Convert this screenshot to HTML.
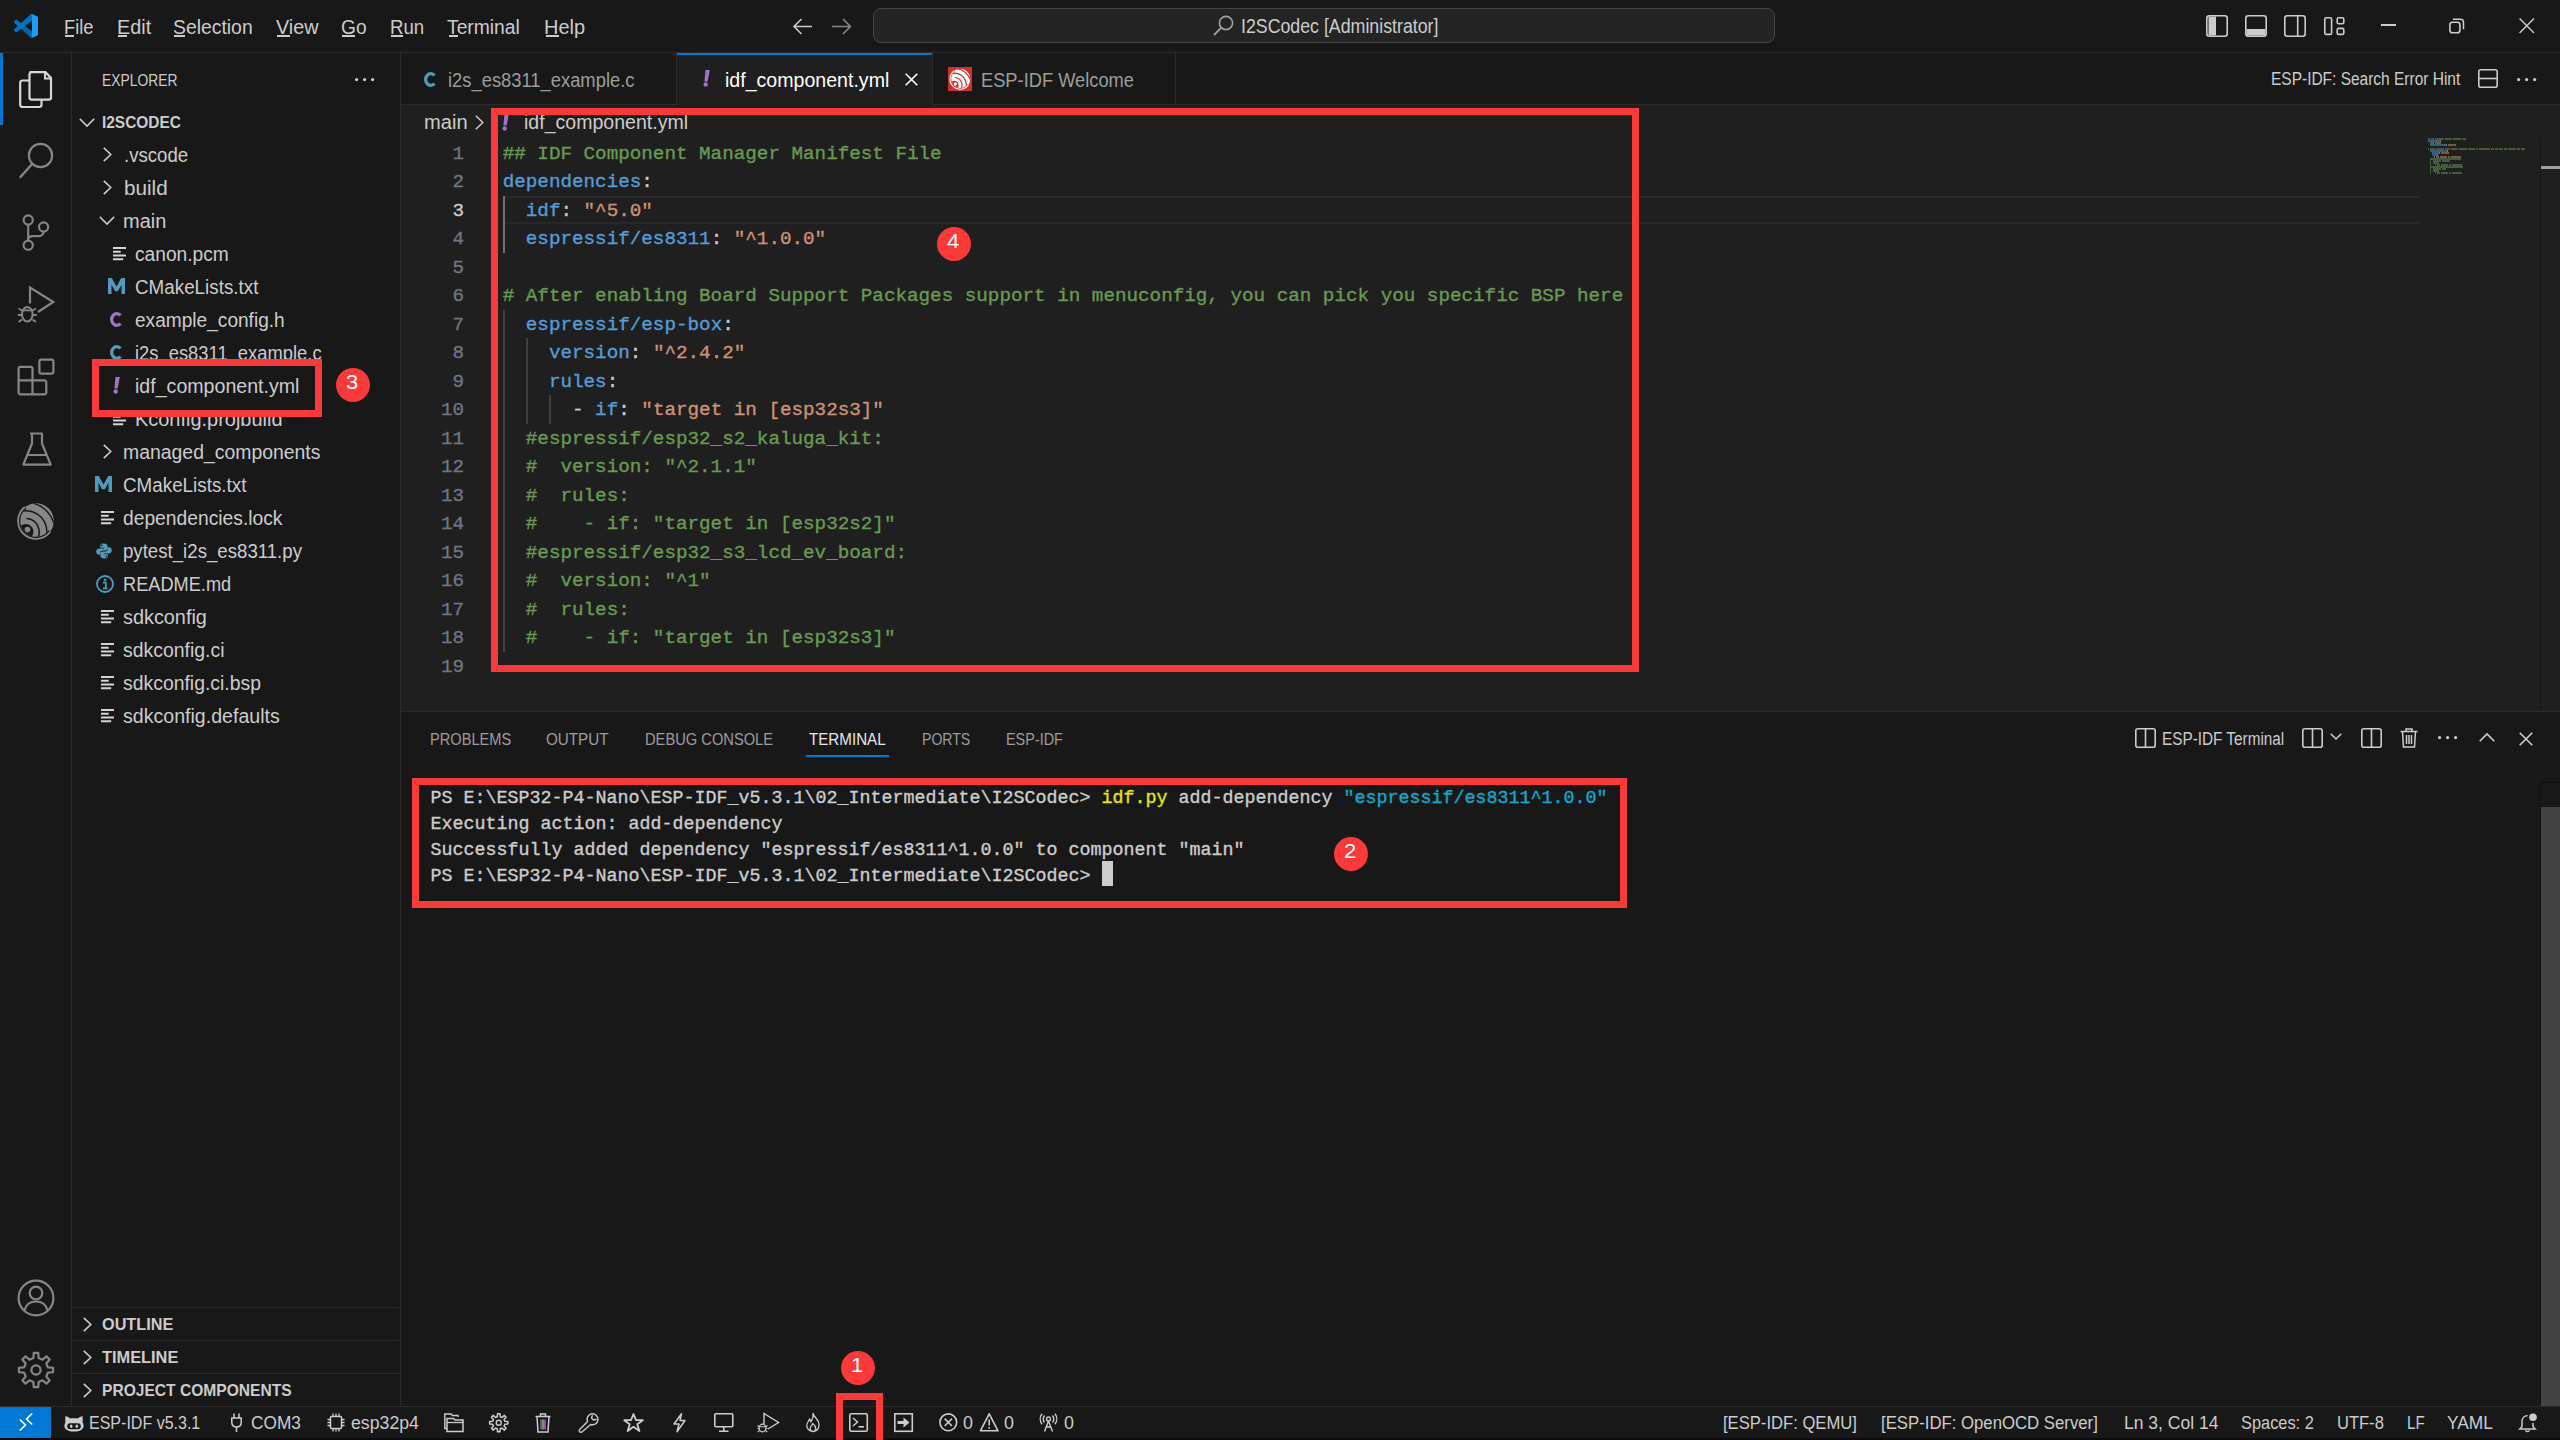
<!DOCTYPE html>
<html><head><meta charset="utf-8">
<style>
*{box-sizing:border-box;margin:0;padding:0}
html,body{width:2560px;height:1440px;overflow:hidden;background:#181818;font-family:"Liberation Sans",sans-serif;color:#cccccc}
.a{position:absolute}
.t{position:absolute;white-space:pre;line-height:1}
svg{position:absolute;overflow:visible}
</style></head><body>
<div class="a" style="left:0px;top:0px;width:2560px;height:1440px;background:#181818;"></div>
<div class="a" style="left:0px;top:52px;width:2560px;height:1px;background:#2b2b2b;"></div>
<div class="a" style="left:71px;top:53px;width:1px;height:1353px;background:#2b2b2b;"></div>
<div class="a" style="left:400px;top:53px;width:1px;height:1353px;background:#2b2b2b;"></div>
<div class="a" style="left:401px;top:104px;width:2159px;height:1px;background:#2b2b2b;"></div>
<div class="a" style="left:401px;top:105px;width:2159px;height:606px;background:#1f1f1f;"></div>
<div class="a" style="left:677px;top:53px;width:255px;height:52px;background:#1f1f1f;"></div>
<div class="a" style="left:677px;top:53px;width:255px;height:2px;background:#0078d4;"></div>
<div class="a" style="left:676px;top:53px;width:1px;height:51px;background:#2b2b2b;"></div>
<div class="a" style="left:932px;top:53px;width:1px;height:51px;background:#2b2b2b;"></div>
<div class="a" style="left:1175px;top:53px;width:1px;height:51px;background:#2b2b2b;"></div>
<div class="a" style="left:401px;top:711px;width:2159px;height:1px;background:#2b2b2b;"></div>
<div class="a" style="left:0px;top:1406px;width:2560px;height:1px;background:#2b2b2b;"></div>
<div class="a" style="left:0px;top:1407px;width:51px;height:31px;background:#0078d4;"></div>
<div class="a" style="left:0px;top:1438px;width:2560px;height:2px;background:#0b0b0b;"></div>
<div class="a" style="left:72px;top:1307px;width:327px;height:1px;background:#2b2b2b;"></div>
<div class="a" style="left:72px;top:1340px;width:327px;height:1px;background:#2b2b2b;"></div>
<div class="a" style="left:72px;top:1373px;width:327px;height:1px;background:#2b2b2b;"></div>
<svg style="left:14px;top:14px;" width="24" height="24" viewBox="0 0 100 100"><path fill="#0065a9" d="M96.46 10.8L75.86.87C73.48-.28 70.62.2 68.75 2.08L29.3 38.06 12.12 25.02c-1.6-1.22-3.84-1.12-5.32.23l-5.52 5.02c-1.81 1.65-1.81 4.51-.01 6.16L16.17 50 1.27 63.57c-1.8 1.65-1.8 4.51.01 6.16l5.52 5.02c1.48 1.35 3.72 1.45 5.32.23L29.3 61.94l39.45 35.98c1.87 1.88 4.73 2.36 7.11 1.21l20.6-9.93c2.16-1.04 3.54-3.23 3.54-5.63V16.43c0-2.4-1.38-4.59-3.54-5.63zM75.02 72.7L45.08 50l29.94-22.7v45.4z"/>
<path fill="#007acc" d="M96.46 10.8L75.86.87C73.48-.28 70.62.2 68.75 2.08L29.3 38.06 12.12 25.02c-1.6-1.22-3.84-1.12-5.32.23l-5.52 5.02c-1.81 1.65-1.81 4.51-.01 6.16L16.17 50 1.27 63.57c-1.8 1.65-1.8 4.51.01 6.16l5.52 5.02c1.48 1.35 3.72 1.45 5.32.23L29.3 61.94 45.08 50 75.02 27.3 96.46 10.8z" opacity="0.6"/>
<path fill="#1f9cf0" d="M75.86 99.13c-2.38 1.15-5.24.67-7.11-1.21 2.3 2.3 6.25.67 6.25-2.59V4.67c0-3.26-3.95-4.89-6.25-2.59 1.87-1.88 4.73-2.36 7.11-1.21l20.6 9.93c2.16 1.04 3.54 3.23 3.54 5.63v67.14c0 2.4-1.38 4.59-3.54 5.63l-20.6 9.93z"/></svg>
<div class="t" style="left:63.50px;top:17.51px;font-family:'Liberation Sans',sans-serif;font-size:19.5px;font-weight:400;color:#cccccc;transform:scaleX(0.9376);transform-origin:0 0;">File</div>
<div class="t" style="left:116.50px;top:17.51px;font-family:'Liberation Sans',sans-serif;font-size:19.5px;font-weight:400;color:#cccccc;transform:scaleX(1.0174);transform-origin:0 0;">Edit</div>
<div class="t" style="left:172.90px;top:17.51px;font-family:'Liberation Sans',sans-serif;font-size:19.5px;font-weight:400;color:#cccccc;transform:scaleX(0.9929);transform-origin:0 0;">Selection</div>
<div class="t" style="left:275.50px;top:17.51px;font-family:'Liberation Sans',sans-serif;font-size:19.5px;font-weight:400;color:#cccccc;transform:scaleX(1.0160);transform-origin:0 0;">View</div>
<div class="t" style="left:340.50px;top:17.51px;font-family:'Liberation Sans',sans-serif;font-size:19.5px;font-weight:400;color:#cccccc;transform:scaleX(0.9815);transform-origin:0 0;">Go</div>
<div class="t" style="left:389.50px;top:17.51px;font-family:'Liberation Sans',sans-serif;font-size:19.5px;font-weight:400;color:#cccccc;transform:scaleX(0.9572);transform-origin:0 0;">Run</div>
<div class="t" style="left:447.25px;top:17.51px;font-family:'Liberation Sans',sans-serif;font-size:19.5px;font-weight:400;color:#cccccc;transform:scaleX(0.9878);transform-origin:0 0;">Terminal</div>
<div class="t" style="left:544.10px;top:17.51px;font-family:'Liberation Sans',sans-serif;font-size:19.5px;font-weight:400;color:#cccccc;transform:scaleX(1.0222);transform-origin:0 0;">Help</div>
<div class="a" style="left:65px;top:35px;width:9px;height:1.5px;background:#cccccc;"></div>
<div class="a" style="left:118px;top:35px;width:9px;height:1.5px;background:#cccccc;"></div>
<div class="a" style="left:174.4px;top:35px;width:10.6px;height:1.5px;background:#cccccc;"></div>
<div class="a" style="left:277px;top:35px;width:13px;height:1.5px;background:#cccccc;"></div>
<div class="a" style="left:342px;top:35px;width:13px;height:1.5px;background:#cccccc;"></div>
<div class="a" style="left:391px;top:35px;width:11.5px;height:1.5px;background:#cccccc;"></div>
<div class="a" style="left:448.75px;top:35px;width:9.25px;height:1.5px;background:#cccccc;"></div>
<div class="a" style="left:545.6px;top:35px;width:13.4px;height:1.5px;background:#cccccc;"></div>
<svg style="left:793px;top:18.4px;" width="20" height="17" viewBox="0 0 20 17"><path d="M1 8.5H19M8.5 1L1 8.5 8.5 16" fill="none" stroke="#cccccc" stroke-width="1.6"/></svg>
<svg style="left:832px;top:18.4px;" width="20" height="17" viewBox="0 0 20 17"><path d="M0 8.5H18.5M11 1L18.5 8.5 11 16" fill="none" stroke="#868686" stroke-width="1.6"/></svg>
<div class="a" style="left:873px;top:8px;width:902px;height:35px;background:#242424;border:1px solid #454545;border-radius:8px;"></div>
<svg style="left:1213px;top:15px;" width="21" height="21" viewBox="0 0 21 21"><circle cx="13" cy="8" r="6.6" fill="none" stroke="#a0a0a0" stroke-width="1.6"/><path d="M8.3 12.7L1 20" stroke="#a0a0a0" stroke-width="1.8"/></svg>
<div class="t" style="left:1240.50px;top:16.51px;font-family:'Liberation Sans',sans-serif;font-size:19.5px;font-weight:400;color:#cccccc;transform:scaleX(0.9108);transform-origin:0 0;">I2SCodec [Administrator]</div>
<svg style="left:2206px;top:15px;" width="22" height="22" viewBox="0 0 22 22"><rect x="0.8" y="0.8" width="20.4" height="20.4" rx="2.5" fill="none" stroke="#cccccc" stroke-width="1.6"/><path d="M2.5 1.5H10V20.5H2.5Z" fill="#cccccc"/></svg>
<svg style="left:2245px;top:15px;" width="22" height="22" viewBox="0 0 22 22"><rect x="0.8" y="0.8" width="20.4" height="20.4" rx="2.5" fill="none" stroke="#cccccc" stroke-width="1.6"/><path d="M1.5 14H20.5V19a1.5 1.5 0 0 1-1.5 1.5H3A1.5 1.5 0 0 1 1.5 19Z" fill="#cccccc"/></svg>
<svg style="left:2284px;top:15px;" width="22" height="22" viewBox="0 0 22 22"><rect x="0.8" y="0.8" width="20.4" height="20.4" rx="2.5" fill="none" stroke="#cccccc" stroke-width="1.6"/><path d="M13.7 1V21" stroke="#cccccc" stroke-width="1.6"/></svg>
<svg style="left:2324px;top:17px;" width="22" height="19" viewBox="0 0 22 19"><rect x="0.8" y="0.8" width="6.8" height="16.6" rx="1.5" fill="none" stroke="#cccccc" stroke-width="1.6"/><rect x="13.2" y="0.8" width="6.6" height="6" rx="1.5" fill="none" stroke="#cccccc" stroke-width="1.6"/><rect x="13.2" y="11.4" width="6.6" height="6" rx="1.5" fill="none" stroke="#cccccc" stroke-width="1.6"/></svg>
<div class="a" style="left:2381px;top:24px;width:15px;height:1.6px;background:#cccccc;"></div>
<svg style="left:2449px;top:17.5px;" width="16" height="16" viewBox="0 0 16 16"><rect x="0.9" y="4.2" width="10" height="10.6" rx="2.6" fill="none" stroke="#cccccc" stroke-width="1.6"/><path d="M4 1.3H11.3A3.2 3.2 0 0 1 14.5 4.5V11.3" fill="none" stroke="#cccccc" stroke-width="1.5"/></svg>
<svg style="left:2518.7px;top:17.8px;" width="16" height="16" viewBox="0 0 16 16"><path d="M0.6 0.6L15 15M15 0.6L0.6 15" stroke="#cccccc" stroke-width="1.4"/></svg>
<div class="a" style="left:0px;top:53px;width:3px;height:72px;background:#0078d4;"></div>
<svg style="left:19px;top:71px;" width="33" height="37" viewBox="0 0 33 37"><path d="M10.5 1.2H26.5L32 7V26.5a2.2 2.2 0 0 1-2.2 2.2H12.7a2.2 2.2 0 0 1-2.2-2.2V3.4a2.2 2.2 0 0 1 2.2-2.2z" fill="none" stroke="#d7d7d7" stroke-width="2.2"/>
<path d="M26 1.5V7.5H32" fill="none" stroke="#d7d7d7" stroke-width="2"/>
<path d="M10.5 9.5H3.4a2.2 2.2 0 0 0-2.2 2.2V33.8a2.2 2.2 0 0 0 2.2 2.2H20.3a2.2 2.2 0 0 0 2.2-2.2V28.7" fill="none" stroke="#d7d7d7" stroke-width="2.2"/></svg>
<svg style="left:18px;top:141px;" width="36" height="39" viewBox="0 0 36 39"><circle cx="22.5" cy="14.5" r="11.6" fill="none" stroke="#868686" stroke-width="2.2"/><path d="M14.3 22.8L2.5 36" stroke="#868686" stroke-width="2.4" stroke-linecap="round"/></svg>
<svg style="left:20px;top:211px;" width="30" height="42" viewBox="0 0 30 42"><circle cx="8.2" cy="9" r="4.6" fill="none" stroke="#868686" stroke-width="2.1"/><circle cx="23.6" cy="16" r="4.6" fill="none" stroke="#868686" stroke-width="2.1"/><circle cx="8.2" cy="34.2" r="4.6" fill="none" stroke="#868686" stroke-width="2.1"/><path d="M8.2 13.6V29.6M8.2 29C8.2 26.5 9.7 25.1 12.7 25.1H19C21.5 25.1 23.6 23.2 23.6 20.6" fill="none" stroke="#868686" stroke-width="2.1"/></svg>
<svg style="left:17px;top:285px;" width="38" height="40" viewBox="0 0 38 40"><path d="M13 18.5V2.5L36.3 17L21 27" fill="none" stroke="#868686" stroke-width="2.2"/>
<ellipse cx="10.3" cy="29.3" rx="5.3" ry="7.3" fill="none" stroke="#868686" stroke-width="2"/>
<path d="M5.2 25.3H15.4M1.5 23.5L5 25.5M19 23.5L15.5 25.5M0.8 30H5M15.5 30H19.8M1.5 37L5 34.5M19 37L15.5 34.5" stroke="#868686" stroke-width="1.8" fill="none"/></svg>
<svg style="left:17px;top:358px;" width="38" height="38" viewBox="0 0 38 38"><rect x="22.4" y="1.6" width="14" height="14" rx="1.8" fill="none" stroke="#868686" stroke-width="2.2"/>
<path d="M3.4 8.8H13.7a1.8 1.8 0 0 1 1.8 1.8V22.4H27.5a1.8 1.8 0 0 1 1.8 1.8V34.5a1.8 1.8 0 0 1-1.8 1.8H3.4a1.8 1.8 0 0 1-1.8-1.8V10.6a1.8 1.8 0 0 1 1.8-1.8z" fill="none" stroke="#868686" stroke-width="2.2"/>
<path d="M1.6 22.4H15.5M15.5 22.4V36.3" stroke="#868686" stroke-width="2.2"/></svg>
<svg style="left:21px;top:432px;" width="32" height="35" viewBox="0 0 32 35"><path d="M9 1.5H21.5M11 1.5V11.5L2.3 32.6H29.7L21 11.5V1.5M6.3 23H25.7" fill="none" stroke="#868686" stroke-width="2.2" stroke-linejoin="round"/></svg>
<svg style="left:10px;top:490px;" width="52" height="60" viewBox="0 0 52 60"><defs><clipPath id="espclip"><circle cx="26" cy="31" r="15.8"/><path d="M15.04 16.97A17.8 17.8 0 0 1 40.22 41.71Z"/></clipPath></defs>
<path d="M14.98 16.89A17.9 17.9 0 1 0 40.30 41.77" fill="none" stroke="#868686" stroke-width="1.9"/>
<g clip-path="url(#espclip)">
<circle cx="26" cy="31" r="19" fill="#868686"/>
<circle cx="15.8" cy="41.7" r="7.6" fill="#181818"/>
<g fill="none" stroke="#181818" stroke-width="1.5">
<path d="M16.96 28.45A13.3 13.3 0 0 1 25.99 50.25" stroke-linecap="round"/>
<path d="M2.30 25.61A21 21 0 0 1 31.89 55.20"/>
<path d="M-3.10 19.18A29.4 29.4 0 0 1 38.32 60.60"/>
</g></g>
<circle cx="17.5" cy="39.6" r="2.8" fill="#868686"/></svg>
<svg style="left:17px;top:1279px;" width="38" height="38" viewBox="0 0 38 38"><circle cx="19" cy="19" r="17.4" fill="none" stroke="#868686" stroke-width="2.2"/><circle cx="19" cy="14" r="6.3" fill="none" stroke="#868686" stroke-width="2.2"/><path d="M7.5 31.5C9 25 13 22.5 19 22.5S29 25 30.5 31.5" fill="none" stroke="#868686" stroke-width="2.2"/></svg>
<svg style="left:17px;top:1351px;" width="38" height="38" viewBox="0 0 38 38"><path d="M30.91 16.34L36.05 16.77L36.05 21.23L30.91 21.66L29.30 25.54L32.64 29.48L29.48 32.64L25.54 29.30L21.66 30.91L21.23 36.05L16.77 36.05L16.34 30.91L12.46 29.30L8.52 32.64L5.36 29.48L8.70 25.54L7.09 21.66L1.95 21.23L1.95 16.77L7.09 16.34L8.70 12.46L5.36 8.52L8.52 5.36L12.46 8.70L16.34 7.09L16.77 1.95L21.23 1.95L21.66 7.09L25.54 8.70L29.48 5.36L32.64 8.52L29.30 12.46Z" fill="none" stroke="#868686" stroke-width="2.2" stroke-linejoin="round"/><circle cx="19" cy="19" r="4.6" fill="none" stroke="#868686" stroke-width="2.2"/></svg>
<div class="t" style="left:101.50px;top:72.47px;font-family:'Liberation Sans',sans-serif;font-size:16.5px;font-weight:400;color:#cccccc;transform:scaleX(0.8391);transform-origin:0 0;">EXPLORER</div>
<svg style="left:354.9px;top:77.5px;" width="3.2" height="3.2" viewBox="0 0 3.2 3.2"><circle cx="1.6" cy="1.6" r="1.6" fill="#cccccc"/></svg>
<svg style="left:362.9px;top:77.5px;" width="3.2" height="3.2" viewBox="0 0 3.2 3.2"><circle cx="1.6" cy="1.6" r="1.6" fill="#cccccc"/></svg>
<svg style="left:370.9px;top:77.5px;" width="3.2" height="3.2" viewBox="0 0 3.2 3.2"><circle cx="1.6" cy="1.6" r="1.6" fill="#cccccc"/></svg>
<svg style="left:79px;top:118px;" width="16" height="9" viewBox="0 0 16 9"><path d="M0.8 0.8L8 8L15.2 0.8" fill="none" stroke="#cccccc" stroke-width="1.6"/></svg>
<div class="t" style="left:101.50px;top:113.97px;font-family:'Liberation Sans',sans-serif;font-size:16.5px;font-weight:700;color:#cccccc;transform:scaleX(0.9345);transform-origin:0 0;">I2SCODEC</div>
<svg style="left:103.4px;top:147.0px;" width="9" height="15" viewBox="0 0 9 15"><path d="M0.8 0.8L7.8 7.5L0.8 14.2" fill="none" stroke="#cccccc" stroke-width="1.6"/></svg>
<div class="t" style="left:123.70px;top:146.01px;font-family:'Liberation Sans',sans-serif;font-size:19.5px;font-weight:400;color:#cccccc;transform:scaleX(0.9552);transform-origin:0 0;">.vscode</div>
<svg style="left:103.4px;top:180.0px;" width="9" height="15" viewBox="0 0 9 15"><path d="M0.8 0.8L7.8 7.5L0.8 14.2" fill="none" stroke="#cccccc" stroke-width="1.6"/></svg>
<div class="t" style="left:123.70px;top:179.01px;font-family:'Liberation Sans',sans-serif;font-size:19.5px;font-weight:400;color:#cccccc;transform:scaleX(1.0595);transform-origin:0 0;">build</div>
<svg style="left:98.7px;top:216.0px;" width="16" height="9" viewBox="0 0 16 9"><path d="M0.8 0.8L8 8L15.2 0.8" fill="none" stroke="#cccccc" stroke-width="1.6"/></svg>
<div class="t" style="left:123.20px;top:212.01px;font-family:'Liberation Sans',sans-serif;font-size:19.5px;font-weight:400;color:#cccccc;transform:scaleX(1.0268);transform-origin:0 0;">main</div>
<svg style="left:113px;top:246.9px;" width="14" height="14" viewBox="0 0 14 14"><path d="M0 1H13M0 4.75H7.7M0 8.5H13M0 12.25H10.2" stroke="#d4d4d4" stroke-width="2"/></svg>
<div class="t" style="left:135.40px;top:245.01px;font-family:'Liberation Sans',sans-serif;font-size:19.5px;font-weight:400;color:#cccccc;transform:scaleX(0.9837);transform-origin:0 0;">canon.pcm</div>
<svg style="left:107.7px;top:277.5px;" width="18" height="17" viewBox="0 0 18 17"><path d="M0 16V0H3.8L8.5 8.6L13.2 0H17V16H13.5V6.8L9.9 13.2H7.1L3.5 6.8V16Z" fill="#519aba"/></svg>
<div class="t" style="left:135.40px;top:278.01px;font-family:'Liberation Sans',sans-serif;font-size:19.5px;font-weight:400;color:#cccccc;transform:scaleX(0.9651);transform-origin:0 0;">CMakeLists.txt</div>
<svg style="left:110px;top:312.0px;" width="14" height="16" viewBox="0 0 14 16"><path d="M10.45 3.59A5.05 5.85 0 1 0 10.45 11.41" fill="none" stroke="#a074c4" stroke-width="3.3"/></svg>
<div class="t" style="left:135.40px;top:311.01px;font-family:'Liberation Sans',sans-serif;font-size:19.5px;font-weight:400;color:#cccccc;transform:scaleX(0.9796);transform-origin:0 0;">example_config.h</div>
<svg style="left:110px;top:345.0px;" width="14" height="16" viewBox="0 0 14 16"><path d="M10.45 3.59A5.05 5.85 0 1 0 10.45 11.41" fill="none" stroke="#519aba" stroke-width="3.3"/></svg>
<div class="t" style="left:135.40px;top:344.01px;font-family:'Liberation Sans',sans-serif;font-size:19.5px;font-weight:400;color:#cccccc;transform:scaleX(0.9422);transform-origin:0 0;">i2s_es8311_example.c</div>
<svg style="left:114px;top:377.0px;" width="8" height="18" viewBox="0 0 8 18"><path d="M1.5 -0.1H5.8L3.7 11.4H0.4Z" fill="#a074c4"/><circle cx="1.7" cy="14.5" r="2.2" fill="#a074c4"/></svg>
<div class="t" style="left:135.40px;top:377.01px;font-family:'Liberation Sans',sans-serif;font-size:19.5px;font-weight:400;color:#cccccc;transform:scaleX(1.0049);transform-origin:0 0;">idf_component.yml</div>
<svg style="left:113px;top:411.9px;" width="14" height="14" viewBox="0 0 14 14"><path d="M0 1H13M0 4.75H7.7M0 8.5H13M0 12.25H10.2" stroke="#d4d4d4" stroke-width="2"/></svg>
<div class="t" style="left:135.40px;top:410.01px;font-family:'Liberation Sans',sans-serif;font-size:19.5px;font-weight:400;color:#cccccc;transform:scaleX(1.0230);transform-origin:0 0;">Kconfig.projbuild</div>
<svg style="left:103.4px;top:444.0px;" width="9" height="15" viewBox="0 0 9 15"><path d="M0.8 0.8L7.8 7.5L0.8 14.2" fill="none" stroke="#cccccc" stroke-width="1.6"/></svg>
<div class="t" style="left:123.00px;top:443.01px;font-family:'Liberation Sans',sans-serif;font-size:19.5px;font-weight:400;color:#cccccc;transform:scaleX(0.9952);transform-origin:0 0;">managed_components</div>
<svg style="left:95.2px;top:475.5px;" width="18" height="17" viewBox="0 0 18 17"><path d="M0 16V0H3.8L8.5 8.6L13.2 0H17V16H13.5V6.8L9.9 13.2H7.1L3.5 6.8V16Z" fill="#519aba"/></svg>
<div class="t" style="left:123.00px;top:476.01px;font-family:'Liberation Sans',sans-serif;font-size:19.5px;font-weight:400;color:#cccccc;transform:scaleX(0.9651);transform-origin:0 0;">CMakeLists.txt</div>
<svg style="left:100.5px;top:510.9px;" width="14" height="14" viewBox="0 0 14 14"><path d="M0 1H13M0 4.75H7.7M0 8.5H13M0 12.25H10.2" stroke="#d4d4d4" stroke-width="2"/></svg>
<div class="t" style="left:123.00px;top:509.01px;font-family:'Liberation Sans',sans-serif;font-size:19.5px;font-weight:400;color:#cccccc;transform:scaleX(0.9873);transform-origin:0 0;">dependencies.lock</div>
<svg style="left:96.25px;top:542.5px;" width="16" height="16" viewBox="0 0 16 16"><path d="M7.8 0.5C4.5 0.5 4.3 1.9 4.3 3V4.8H8V5.6H2.9C1.3 5.6 0.2 7 0.2 8.6S1.2 11.7 2.8 11.7H4.3V9.7C4.3 8.4 5.4 7.5 6.6 7.5H9.7C10.8 7.5 11.6 6.6 11.6 5.6V3C11.6 1.5 10.3 0.5 7.8 0.5ZM5.8 1.6A.8.8 0 1 1 5.8 3.2.8.8 0 0 1 5.8 1.6Z" fill="#519aba"/><path d="M8.2 15.5C11.5 15.5 11.7 14.1 11.7 13V11.2H8V10.4H13.1C14.7 10.4 15.8 9 15.8 7.4S14.8 4.3 13.2 4.3H11.7V6.3C11.7 7.6 10.6 8.5 9.4 8.5H6.3C5.2 8.5 4.4 9.4 4.4 10.4V13C4.4 14.5 5.7 15.5 8.2 15.5ZM10.2 14.4A.8.8 0 1 1 10.2 12.8.8.8 0 0 1 10.2 14.4Z" fill="#519aba"/></svg>
<div class="t" style="left:123.00px;top:542.01px;font-family:'Liberation Sans',sans-serif;font-size:19.5px;font-weight:400;color:#cccccc;transform:scaleX(0.9562);transform-origin:0 0;">pytest_i2s_es8311.py</div>
<svg style="left:95.5px;top:574.5px;" width="18" height="18" viewBox="0 0 18 18"><circle cx="9" cy="9" r="8" fill="none" stroke="#519aba" stroke-width="1.8"/><circle cx="9" cy="5" r="1.3" fill="#519aba"/><path d="M7 7.6H9.8V13.2M6.8 13.4H11.4" fill="none" stroke="#519aba" stroke-width="1.7"/></svg>
<div class="t" style="left:123.00px;top:575.01px;font-family:'Liberation Sans',sans-serif;font-size:19.5px;font-weight:400;color:#cccccc;transform:scaleX(0.9329);transform-origin:0 0;">README.md</div>
<svg style="left:100.5px;top:609.9px;" width="14" height="14" viewBox="0 0 14 14"><path d="M0 1H13M0 4.75H7.7M0 8.5H13M0 12.25H10.2" stroke="#d4d4d4" stroke-width="2"/></svg>
<div class="t" style="left:123.00px;top:608.01px;font-family:'Liberation Sans',sans-serif;font-size:19.5px;font-weight:400;color:#cccccc;transform:scaleX(1.0183);transform-origin:0 0;">sdkconfig</div>
<svg style="left:100.5px;top:642.9px;" width="14" height="14" viewBox="0 0 14 14"><path d="M0 1H13M0 4.75H7.7M0 8.5H13M0 12.25H10.2" stroke="#d4d4d4" stroke-width="2"/></svg>
<div class="t" style="left:123.00px;top:641.01px;font-family:'Liberation Sans',sans-serif;font-size:19.5px;font-weight:400;color:#cccccc;transform:scaleX(0.9968);transform-origin:0 0;">sdkconfig.ci</div>
<svg style="left:100.5px;top:675.9px;" width="14" height="14" viewBox="0 0 14 14"><path d="M0 1H13M0 4.75H7.7M0 8.5H13M0 12.25H10.2" stroke="#d4d4d4" stroke-width="2"/></svg>
<div class="t" style="left:123.00px;top:674.01px;font-family:'Liberation Sans',sans-serif;font-size:19.5px;font-weight:400;color:#cccccc;transform:scaleX(0.9950);transform-origin:0 0;">sdkconfig.ci.bsp</div>
<svg style="left:100.5px;top:708.9px;" width="14" height="14" viewBox="0 0 14 14"><path d="M0 1H13M0 4.75H7.7M0 8.5H13M0 12.25H10.2" stroke="#d4d4d4" stroke-width="2"/></svg>
<div class="t" style="left:123.00px;top:707.01px;font-family:'Liberation Sans',sans-serif;font-size:19.5px;font-weight:400;color:#cccccc;transform:scaleX(1.0043);transform-origin:0 0;">sdkconfig.defaults</div>
<svg style="left:83.3px;top:1317px;" width="9" height="15" viewBox="0 0 9 15"><path d="M0.8 0.8L7.8 7.5L0.8 14.2" fill="none" stroke="#cccccc" stroke-width="1.6"/></svg>
<div class="t" style="left:101.50px;top:1316.47px;font-family:'Liberation Sans',sans-serif;font-size:16.5px;font-weight:700;color:#cccccc;transform:scaleX(0.9846);transform-origin:0 0;">OUTLINE</div>
<svg style="left:83.3px;top:1350px;" width="9" height="15" viewBox="0 0 9 15"><path d="M0.8 0.8L7.8 7.5L0.8 14.2" fill="none" stroke="#cccccc" stroke-width="1.6"/></svg>
<div class="t" style="left:101.50px;top:1349.47px;font-family:'Liberation Sans',sans-serif;font-size:16.5px;font-weight:700;color:#cccccc;transform:scaleX(0.9910);transform-origin:0 0;">TIMELINE</div>
<svg style="left:83.3px;top:1383px;" width="9" height="15" viewBox="0 0 9 15"><path d="M0.8 0.8L7.8 7.5L0.8 14.2" fill="none" stroke="#cccccc" stroke-width="1.6"/></svg>
<div class="t" style="left:101.50px;top:1382.47px;font-family:'Liberation Sans',sans-serif;font-size:16.5px;font-weight:700;color:#cccccc;transform:scaleX(0.9446);transform-origin:0 0;">PROJECT COMPONENTS</div>
<svg style="left:423.5px;top:71.5px;" width="14" height="16" viewBox="0 0 14 16"><path d="M10.45 3.59A5.05 5.85 0 1 0 10.45 11.41" fill="none" stroke="#519aba" stroke-width="3.3"/></svg>
<div class="t" style="left:448.00px;top:70.51px;font-family:'Liberation Sans',sans-serif;font-size:19.5px;font-weight:400;color:#9d9d9d;transform:scaleX(0.9416);transform-origin:0 0;">i2s_es8311_example.c</div>
<svg style="left:704.3px;top:70px;" width="8" height="18" viewBox="0 0 8 18"><path d="M1.5 -0.1H5.8L3.7 11.4H0.4Z" fill="#a074c4"/><circle cx="1.7" cy="14.5" r="2.2" fill="#a074c4"/></svg>
<div class="t" style="left:725.00px;top:70.51px;font-family:'Liberation Sans',sans-serif;font-size:19.5px;font-weight:400;color:#ffffff;transform:scaleX(1.0040);transform-origin:0 0;">idf_component.yml</div>
<svg style="left:904.5px;top:72.5px;" width="13" height="13" viewBox="0 0 13 13"><path d="M0.7 0.7L12.3 12.3M12.3 0.7L0.7 12.3" stroke="#ffffff" stroke-width="1.6"/></svg>
<svg style="left:948px;top:67px;" width="24" height="24" viewBox="0 0 24 24"><rect x="0" y="0" width="24" height="24" fill="#d0302a"/>
<defs><clipPath id="espclip2"><circle cx="26" cy="31" r="15.8"/><path d="M15.04 16.97A17.8 17.8 0 0 1 40.22 41.71Z"/></clipPath></defs>
<g transform="translate(12.2 12) scale(0.57) translate(-26 -31)">
<path d="M14.98 16.89A17.9 17.9 0 1 0 40.30 41.77" fill="none" stroke="#fff" stroke-width="1.9"/>
<g clip-path="url(#espclip2)">
<circle cx="26" cy="31" r="19" fill="#fff"/>
<circle cx="15.8" cy="41.7" r="7.6" fill="#d0302a"/>
<g fill="none" stroke="#d0302a" stroke-width="2">
<path d="M16.96 28.45A13.3 13.3 0 0 1 25.99 50.25" stroke-linecap="round"/>
<path d="M2.30 25.61A21 21 0 0 1 31.89 55.20"/>
<path d="M-3.10 19.18A29.4 29.4 0 0 1 38.32 60.60"/>
</g></g>
<circle cx="17.5" cy="39.6" r="2.8" fill="#fff"/></g></svg>
<div class="t" style="left:981.00px;top:70.51px;font-family:'Liberation Sans',sans-serif;font-size:19.5px;font-weight:400;color:#9d9d9d;transform:scaleX(0.9369);transform-origin:0 0;">ESP-IDF Welcome</div>
<div class="t" style="left:2271.00px;top:70.24px;font-family:'Liberation Sans',sans-serif;font-size:18px;font-weight:400;color:#cccccc;transform:scaleX(0.8599);transform-origin:0 0;">ESP-IDF: Search Error Hint</div>
<svg style="left:2478px;top:69px;" width="20" height="19" viewBox="0 0 20 19"><rect x="0.8" y="0.8" width="18.4" height="17.4" rx="2" fill="none" stroke="#cccccc" stroke-width="1.6"/><path d="M1 9.5H19" stroke="#cccccc" stroke-width="1.6"/></svg>
<svg style="left:2516.9px;top:77.9px;" width="3.2" height="3.2" viewBox="0 0 3.2 3.2"><circle cx="1.6" cy="1.6" r="1.6" fill="#cccccc"/></svg>
<svg style="left:2524.9px;top:77.9px;" width="3.2" height="3.2" viewBox="0 0 3.2 3.2"><circle cx="1.6" cy="1.6" r="1.6" fill="#cccccc"/></svg>
<svg style="left:2532.9px;top:77.9px;" width="3.2" height="3.2" viewBox="0 0 3.2 3.2"><circle cx="1.6" cy="1.6" r="1.6" fill="#cccccc"/></svg>
<div class="t" style="left:424.00px;top:113.01px;font-family:'Liberation Sans',sans-serif;font-size:19.5px;font-weight:400;color:#cccccc;transform:scaleX(1.0317);transform-origin:0 0;">main</div>
<svg style="left:475px;top:114.5px;" width="9" height="15" viewBox="0 0 9 15"><path d="M0.8 0.8L7.8 7.5L0.8 14.2" fill="none" stroke="#cccccc" stroke-width="1.5"/></svg>
<svg style="left:502.9px;top:113.7px;" width="8" height="18" viewBox="0 0 8 18"><path d="M1.5 -0.1H5.8L3.7 11.4H0.4Z" fill="#a074c4"/><circle cx="1.7" cy="14.5" r="2.2" fill="#a074c4"/></svg>
<div class="t" style="left:524.00px;top:113.01px;font-family:'Liberation Sans',sans-serif;font-size:19.5px;font-weight:400;color:#cccccc;transform:scaleX(1.0024);transform-origin:0 0;">idf_component.yml</div>
<div class="a" style="left:505px;top:195.5px;width:1915px;height:28.5px;background:transparent;border-top:2px solid #282828;border-bottom:2px solid #282828;"></div>
<div class="a" style="left:503.0px;top:195.5px;width:2px;height:57.0px;background:#707070;"></div>
<div class="a" style="left:503.0px;top:309.5px;width:2px;height:342.0px;background:#404040;"></div>
<div class="a" style="left:526.1px;top:338.0px;width:2px;height:85.5px;background:#404040;"></div>
<div class="a" style="left:549.2px;top:395.0px;width:2px;height:28.5px;background:#404040;"></div>
<div class="t" style="left:452.45px;top:144.75px;font-family:'Liberation Mono',monospace;font-size:19.25px;font-weight:400;color:#6e7681;-webkit-text-stroke:0.35px currentColor;">1</div>
<div class="t" style="left:502.70px;top:144.75px;font-family:'Liberation Mono',monospace;font-size:19.25px;font-weight:400;color:#cccccc;-webkit-text-stroke:0.35px currentColor;"><span style="color:#6a9955">## IDF Component Manager Manifest File</span></div>
<div class="t" style="left:452.45px;top:173.25px;font-family:'Liberation Mono',monospace;font-size:19.25px;font-weight:400;color:#6e7681;-webkit-text-stroke:0.35px currentColor;">2</div>
<div class="t" style="left:502.70px;top:173.25px;font-family:'Liberation Mono',monospace;font-size:19.25px;font-weight:400;color:#cccccc;-webkit-text-stroke:0.35px currentColor;"><span style="color:#569cd6">dependencies</span><span style="color:#cccccc">:</span></div>
<div class="t" style="left:452.45px;top:201.75px;font-family:'Liberation Mono',monospace;font-size:19.25px;font-weight:400;color:#cccccc;-webkit-text-stroke:0.35px currentColor;">3</div>
<div class="t" style="left:502.70px;top:201.75px;font-family:'Liberation Mono',monospace;font-size:19.25px;font-weight:400;color:#cccccc;-webkit-text-stroke:0.35px currentColor;"><span style="color:#cccccc">  </span><span style="color:#569cd6">idf</span><span style="color:#cccccc">: </span><span style="color:#ce9178">&quot;^5.0&quot;</span></div>
<div class="t" style="left:452.45px;top:230.25px;font-family:'Liberation Mono',monospace;font-size:19.25px;font-weight:400;color:#6e7681;-webkit-text-stroke:0.35px currentColor;">4</div>
<div class="t" style="left:502.70px;top:230.25px;font-family:'Liberation Mono',monospace;font-size:19.25px;font-weight:400;color:#cccccc;-webkit-text-stroke:0.35px currentColor;"><span style="color:#cccccc">  </span><span style="color:#569cd6">espressif/es8311</span><span style="color:#cccccc">: </span><span style="color:#ce9178">&quot;^1.0.0&quot;</span></div>
<div class="t" style="left:452.45px;top:258.75px;font-family:'Liberation Mono',monospace;font-size:19.25px;font-weight:400;color:#6e7681;-webkit-text-stroke:0.35px currentColor;">5</div>
<div class="t" style="left:452.45px;top:287.25px;font-family:'Liberation Mono',monospace;font-size:19.25px;font-weight:400;color:#6e7681;-webkit-text-stroke:0.35px currentColor;">6</div>
<div class="t" style="left:502.70px;top:287.25px;font-family:'Liberation Mono',monospace;font-size:19.25px;font-weight:400;color:#cccccc;-webkit-text-stroke:0.35px currentColor;"><span style="color:#6a9955"># After enabling Board Support Packages support in menuconfig, you can pick you specific BSP here</span></div>
<div class="t" style="left:452.45px;top:315.75px;font-family:'Liberation Mono',monospace;font-size:19.25px;font-weight:400;color:#6e7681;-webkit-text-stroke:0.35px currentColor;">7</div>
<div class="t" style="left:502.70px;top:315.75px;font-family:'Liberation Mono',monospace;font-size:19.25px;font-weight:400;color:#cccccc;-webkit-text-stroke:0.35px currentColor;"><span style="color:#cccccc">  </span><span style="color:#569cd6">espressif/esp-box</span><span style="color:#cccccc">:</span></div>
<div class="t" style="left:452.45px;top:344.25px;font-family:'Liberation Mono',monospace;font-size:19.25px;font-weight:400;color:#6e7681;-webkit-text-stroke:0.35px currentColor;">8</div>
<div class="t" style="left:502.70px;top:344.25px;font-family:'Liberation Mono',monospace;font-size:19.25px;font-weight:400;color:#cccccc;-webkit-text-stroke:0.35px currentColor;"><span style="color:#cccccc">    </span><span style="color:#569cd6">version</span><span style="color:#cccccc">: </span><span style="color:#ce9178">&quot;^2.4.2&quot;</span></div>
<div class="t" style="left:452.45px;top:372.75px;font-family:'Liberation Mono',monospace;font-size:19.25px;font-weight:400;color:#6e7681;-webkit-text-stroke:0.35px currentColor;">9</div>
<div class="t" style="left:502.70px;top:372.75px;font-family:'Liberation Mono',monospace;font-size:19.25px;font-weight:400;color:#cccccc;-webkit-text-stroke:0.35px currentColor;"><span style="color:#cccccc">    </span><span style="color:#569cd6">rules</span><span style="color:#cccccc">:</span></div>
<div class="t" style="left:440.90px;top:401.25px;font-family:'Liberation Mono',monospace;font-size:19.25px;font-weight:400;color:#6e7681;-webkit-text-stroke:0.35px currentColor;">10</div>
<div class="t" style="left:502.70px;top:401.25px;font-family:'Liberation Mono',monospace;font-size:19.25px;font-weight:400;color:#cccccc;-webkit-text-stroke:0.35px currentColor;"><span style="color:#cccccc">      - </span><span style="color:#569cd6">if</span><span style="color:#cccccc">: </span><span style="color:#ce9178">&quot;target in [esp32s3]&quot;</span></div>
<div class="t" style="left:440.90px;top:429.75px;font-family:'Liberation Mono',monospace;font-size:19.25px;font-weight:400;color:#6e7681;-webkit-text-stroke:0.35px currentColor;">11</div>
<div class="t" style="left:502.70px;top:429.75px;font-family:'Liberation Mono',monospace;font-size:19.25px;font-weight:400;color:#cccccc;-webkit-text-stroke:0.35px currentColor;"><span style="color:#6a9955">  #espressif/esp32_s2_kaluga_kit:</span></div>
<div class="t" style="left:440.90px;top:458.25px;font-family:'Liberation Mono',monospace;font-size:19.25px;font-weight:400;color:#6e7681;-webkit-text-stroke:0.35px currentColor;">12</div>
<div class="t" style="left:502.70px;top:458.25px;font-family:'Liberation Mono',monospace;font-size:19.25px;font-weight:400;color:#cccccc;-webkit-text-stroke:0.35px currentColor;"><span style="color:#6a9955">  #  version: &quot;^2.1.1&quot;</span></div>
<div class="t" style="left:440.90px;top:486.75px;font-family:'Liberation Mono',monospace;font-size:19.25px;font-weight:400;color:#6e7681;-webkit-text-stroke:0.35px currentColor;">13</div>
<div class="t" style="left:502.70px;top:486.75px;font-family:'Liberation Mono',monospace;font-size:19.25px;font-weight:400;color:#cccccc;-webkit-text-stroke:0.35px currentColor;"><span style="color:#6a9955">  #  rules:</span></div>
<div class="t" style="left:440.90px;top:515.25px;font-family:'Liberation Mono',monospace;font-size:19.25px;font-weight:400;color:#6e7681;-webkit-text-stroke:0.35px currentColor;">14</div>
<div class="t" style="left:502.70px;top:515.25px;font-family:'Liberation Mono',monospace;font-size:19.25px;font-weight:400;color:#cccccc;-webkit-text-stroke:0.35px currentColor;"><span style="color:#6a9955">  #    - if: &quot;target in [esp32s2]&quot;</span></div>
<div class="t" style="left:440.90px;top:543.75px;font-family:'Liberation Mono',monospace;font-size:19.25px;font-weight:400;color:#6e7681;-webkit-text-stroke:0.35px currentColor;">15</div>
<div class="t" style="left:502.70px;top:543.75px;font-family:'Liberation Mono',monospace;font-size:19.25px;font-weight:400;color:#cccccc;-webkit-text-stroke:0.35px currentColor;"><span style="color:#6a9955">  #espressif/esp32_s3_lcd_ev_board:</span></div>
<div class="t" style="left:440.90px;top:572.25px;font-family:'Liberation Mono',monospace;font-size:19.25px;font-weight:400;color:#6e7681;-webkit-text-stroke:0.35px currentColor;">16</div>
<div class="t" style="left:502.70px;top:572.25px;font-family:'Liberation Mono',monospace;font-size:19.25px;font-weight:400;color:#cccccc;-webkit-text-stroke:0.35px currentColor;"><span style="color:#6a9955">  #  version: &quot;^1&quot;</span></div>
<div class="t" style="left:440.90px;top:600.75px;font-family:'Liberation Mono',monospace;font-size:19.25px;font-weight:400;color:#6e7681;-webkit-text-stroke:0.35px currentColor;">17</div>
<div class="t" style="left:502.70px;top:600.75px;font-family:'Liberation Mono',monospace;font-size:19.25px;font-weight:400;color:#cccccc;-webkit-text-stroke:0.35px currentColor;"><span style="color:#6a9955">  #  rules:</span></div>
<div class="t" style="left:440.90px;top:629.25px;font-family:'Liberation Mono',monospace;font-size:19.25px;font-weight:400;color:#6e7681;-webkit-text-stroke:0.35px currentColor;">18</div>
<div class="t" style="left:502.70px;top:629.25px;font-family:'Liberation Mono',monospace;font-size:19.25px;font-weight:400;color:#cccccc;-webkit-text-stroke:0.35px currentColor;"><span style="color:#6a9955">  #    - if: &quot;target in [esp32s3]&quot;</span></div>
<div class="t" style="left:440.90px;top:657.75px;font-family:'Liberation Mono',monospace;font-size:19.25px;font-weight:400;color:#6e7681;-webkit-text-stroke:0.35px currentColor;">19</div>
<div class="a" style="left:2428px;top:138px;width:2px;height:1.6px;background:#6a9955;opacity:0.5;"></div>
<div class="a" style="left:2431px;top:138px;width:3px;height:1.6px;background:#6a9955;opacity:0.5;"></div>
<div class="a" style="left:2435px;top:138px;width:9px;height:1.6px;background:#6a9955;opacity:0.5;"></div>
<div class="a" style="left:2445px;top:138px;width:7px;height:1.6px;background:#6a9955;opacity:0.5;"></div>
<div class="a" style="left:2453px;top:138px;width:8px;height:1.6px;background:#6a9955;opacity:0.5;"></div>
<div class="a" style="left:2462px;top:138px;width:4px;height:1.6px;background:#6a9955;opacity:0.5;"></div>
<div class="a" style="left:2428px;top:140px;width:12px;height:1.6px;background:#569cd6;opacity:0.5;"></div>
<div class="a" style="left:2440px;top:140px;width:1px;height:1.6px;background:#cccccc;opacity:0.5;"></div>
<div class="a" style="left:2430px;top:142px;width:3px;height:1.6px;background:#569cd6;opacity:0.5;"></div>
<div class="a" style="left:2433px;top:142px;width:1px;height:1.6px;background:#cccccc;opacity:0.5;"></div>
<div class="a" style="left:2435px;top:142px;width:6px;height:1.6px;background:#ce9178;opacity:0.5;"></div>
<div class="a" style="left:2430px;top:144px;width:16px;height:1.6px;background:#569cd6;opacity:0.5;"></div>
<div class="a" style="left:2446px;top:144px;width:1px;height:1.6px;background:#cccccc;opacity:0.5;"></div>
<div class="a" style="left:2448px;top:144px;width:8px;height:1.6px;background:#ce9178;opacity:0.5;"></div>
<div class="a" style="left:2428px;top:148px;width:1px;height:1.6px;background:#6a9955;opacity:0.5;"></div>
<div class="a" style="left:2430px;top:148px;width:5px;height:1.6px;background:#6a9955;opacity:0.5;"></div>
<div class="a" style="left:2436px;top:148px;width:8px;height:1.6px;background:#6a9955;opacity:0.5;"></div>
<div class="a" style="left:2445px;top:148px;width:5px;height:1.6px;background:#6a9955;opacity:0.5;"></div>
<div class="a" style="left:2451px;top:148px;width:7px;height:1.6px;background:#6a9955;opacity:0.5;"></div>
<div class="a" style="left:2459px;top:148px;width:8px;height:1.6px;background:#6a9955;opacity:0.5;"></div>
<div class="a" style="left:2468px;top:148px;width:7px;height:1.6px;background:#6a9955;opacity:0.5;"></div>
<div class="a" style="left:2476px;top:148px;width:2px;height:1.6px;background:#6a9955;opacity:0.5;"></div>
<div class="a" style="left:2479px;top:148px;width:11px;height:1.6px;background:#6a9955;opacity:0.5;"></div>
<div class="a" style="left:2491px;top:148px;width:3px;height:1.6px;background:#6a9955;opacity:0.5;"></div>
<div class="a" style="left:2495px;top:148px;width:3px;height:1.6px;background:#6a9955;opacity:0.5;"></div>
<div class="a" style="left:2499px;top:148px;width:4px;height:1.6px;background:#6a9955;opacity:0.5;"></div>
<div class="a" style="left:2504px;top:148px;width:3px;height:1.6px;background:#6a9955;opacity:0.5;"></div>
<div class="a" style="left:2508px;top:148px;width:8px;height:1.6px;background:#6a9955;opacity:0.5;"></div>
<div class="a" style="left:2517px;top:148px;width:3px;height:1.6px;background:#6a9955;opacity:0.5;"></div>
<div class="a" style="left:2521px;top:148px;width:4px;height:1.6px;background:#6a9955;opacity:0.5;"></div>
<div class="a" style="left:2430px;top:150px;width:17px;height:1.6px;background:#569cd6;opacity:0.5;"></div>
<div class="a" style="left:2447px;top:150px;width:1px;height:1.6px;background:#cccccc;opacity:0.5;"></div>
<div class="a" style="left:2432px;top:152px;width:7px;height:1.6px;background:#569cd6;opacity:0.5;"></div>
<div class="a" style="left:2439px;top:152px;width:1px;height:1.6px;background:#cccccc;opacity:0.5;"></div>
<div class="a" style="left:2441px;top:152px;width:8px;height:1.6px;background:#ce9178;opacity:0.5;"></div>
<div class="a" style="left:2432px;top:154px;width:5px;height:1.6px;background:#569cd6;opacity:0.5;"></div>
<div class="a" style="left:2437px;top:154px;width:1px;height:1.6px;background:#cccccc;opacity:0.5;"></div>
<div class="a" style="left:2434px;top:156px;width:1px;height:1.6px;background:#cccccc;opacity:0.5;"></div>
<div class="a" style="left:2436px;top:156px;width:2px;height:1.6px;background:#569cd6;opacity:0.5;"></div>
<div class="a" style="left:2438px;top:156px;width:1px;height:1.6px;background:#cccccc;opacity:0.5;"></div>
<div class="a" style="left:2440px;top:156px;width:7px;height:1.6px;background:#ce9178;opacity:0.5;"></div>
<div class="a" style="left:2448px;top:156px;width:2px;height:1.6px;background:#ce9178;opacity:0.5;"></div>
<div class="a" style="left:2451px;top:156px;width:10px;height:1.6px;background:#ce9178;opacity:0.5;"></div>
<div class="a" style="left:2430px;top:158px;width:31px;height:1.6px;background:#6a9955;opacity:0.5;"></div>
<div class="a" style="left:2430px;top:160px;width:1px;height:1.6px;background:#6a9955;opacity:0.5;"></div>
<div class="a" style="left:2433px;top:160px;width:8px;height:1.6px;background:#6a9955;opacity:0.5;"></div>
<div class="a" style="left:2442px;top:160px;width:8px;height:1.6px;background:#6a9955;opacity:0.5;"></div>
<div class="a" style="left:2430px;top:162px;width:1px;height:1.6px;background:#6a9955;opacity:0.5;"></div>
<div class="a" style="left:2433px;top:162px;width:6px;height:1.6px;background:#6a9955;opacity:0.5;"></div>
<div class="a" style="left:2430px;top:164px;width:1px;height:1.6px;background:#6a9955;opacity:0.5;"></div>
<div class="a" style="left:2435px;top:164px;width:1px;height:1.6px;background:#6a9955;opacity:0.5;"></div>
<div class="a" style="left:2437px;top:164px;width:3px;height:1.6px;background:#6a9955;opacity:0.5;"></div>
<div class="a" style="left:2441px;top:164px;width:7px;height:1.6px;background:#6a9955;opacity:0.5;"></div>
<div class="a" style="left:2449px;top:164px;width:2px;height:1.6px;background:#6a9955;opacity:0.5;"></div>
<div class="a" style="left:2452px;top:164px;width:10px;height:1.6px;background:#6a9955;opacity:0.5;"></div>
<div class="a" style="left:2430px;top:166px;width:33px;height:1.6px;background:#6a9955;opacity:0.5;"></div>
<div class="a" style="left:2430px;top:168px;width:1px;height:1.6px;background:#6a9955;opacity:0.5;"></div>
<div class="a" style="left:2433px;top:168px;width:8px;height:1.6px;background:#6a9955;opacity:0.5;"></div>
<div class="a" style="left:2442px;top:168px;width:4px;height:1.6px;background:#6a9955;opacity:0.5;"></div>
<div class="a" style="left:2430px;top:170px;width:1px;height:1.6px;background:#6a9955;opacity:0.5;"></div>
<div class="a" style="left:2433px;top:170px;width:6px;height:1.6px;background:#6a9955;opacity:0.5;"></div>
<div class="a" style="left:2430px;top:172px;width:1px;height:1.6px;background:#6a9955;opacity:0.5;"></div>
<div class="a" style="left:2435px;top:172px;width:1px;height:1.6px;background:#6a9955;opacity:0.5;"></div>
<div class="a" style="left:2437px;top:172px;width:3px;height:1.6px;background:#6a9955;opacity:0.5;"></div>
<div class="a" style="left:2441px;top:172px;width:7px;height:1.6px;background:#6a9955;opacity:0.5;"></div>
<div class="a" style="left:2449px;top:172px;width:2px;height:1.6px;background:#6a9955;opacity:0.5;"></div>
<div class="a" style="left:2452px;top:172px;width:10px;height:1.6px;background:#6a9955;opacity:0.5;"></div>
<div class="a" style="left:2540px;top:138px;width:1px;height:573px;background:#151515;"></div>
<div class="a" style="left:2541px;top:166px;width:19px;height:3px;background:#a0a0a0;"></div>
<div class="t" style="left:430.00px;top:730.97px;font-family:'Liberation Sans',sans-serif;font-size:16.5px;font-weight:400;color:#9d9d9d;transform:scaleX(0.8852);transform-origin:0 0;">PROBLEMS</div>
<div class="t" style="left:546.30px;top:730.97px;font-family:'Liberation Sans',sans-serif;font-size:16.5px;font-weight:400;color:#9d9d9d;transform:scaleX(0.9217);transform-origin:0 0;">OUTPUT</div>
<div class="t" style="left:644.80px;top:730.97px;font-family:'Liberation Sans',sans-serif;font-size:16.5px;font-weight:400;color:#9d9d9d;transform:scaleX(0.8897);transform-origin:0 0;">DEBUG CONSOLE</div>
<div class="t" style="left:808.90px;top:730.97px;font-family:'Liberation Sans',sans-serif;font-size:16.5px;font-weight:400;color:#e7e7e7;transform:scaleX(0.9183);transform-origin:0 0;">TERMINAL</div>
<div class="t" style="left:921.50px;top:730.97px;font-family:'Liberation Sans',sans-serif;font-size:16.5px;font-weight:400;color:#9d9d9d;transform:scaleX(0.8529);transform-origin:0 0;">PORTS</div>
<div class="t" style="left:1005.80px;top:730.97px;font-family:'Liberation Sans',sans-serif;font-size:16.5px;font-weight:400;color:#9d9d9d;transform:scaleX(0.8734);transform-origin:0 0;">ESP-IDF</div>
<div class="a" style="left:806px;top:754.5px;width:83px;height:2px;background:#0078d4;"></div>
<svg style="left:2134.5px;top:727.5px;" width="21" height="20" viewBox="0 0 21 20"><rect x="0.8" y="0.8" width="19.4" height="18.4" rx="2" fill="none" stroke="#cccccc" stroke-width="1.6"/><path d="M10.5 1V19" stroke="#cccccc" stroke-width="1.6"/></svg>
<div class="t" style="left:2161.50px;top:730.24px;font-family:'Liberation Sans',sans-serif;font-size:18px;font-weight:400;color:#cccccc;transform:scaleX(0.8505);transform-origin:0 0;">ESP-IDF Terminal</div>
<svg style="left:2302px;top:727.5px;" width="21" height="20" viewBox="0 0 21 20"><rect x="0.8" y="0.8" width="19.4" height="18.4" rx="2" fill="none" stroke="#cccccc" stroke-width="1.6"/><path d="M10.5 1V19" stroke="#cccccc" stroke-width="1.6"/></svg>
<svg style="left:2329.5px;top:733px;" width="12" height="8" viewBox="0 0 12 8"><path d="M0.7 0.7L6 6L11.3 0.7" fill="none" stroke="#cccccc" stroke-width="1.5"/></svg>
<svg style="left:2360.5px;top:727.5px;" width="21" height="20" viewBox="0 0 21 20"><rect x="0.8" y="0.8" width="19.4" height="18.4" rx="2" fill="none" stroke="#cccccc" stroke-width="1.6"/><path d="M10.5 1V19" stroke="#cccccc" stroke-width="1.6"/></svg>
<svg style="left:2399.5px;top:727.5px;" width="18" height="20" viewBox="0 0 18 20"><path d="M0.5 3.5H17.5M6 3.5V1H12V3.5M2.5 3.5L3.5 19H14.5L15.5 3.5M6.5 7V16M9 7V16M11.5 7V16" fill="none" stroke="#cccccc" stroke-width="1.5"/></svg>
<svg style="left:2438.4px;top:736.4px;" width="3.2" height="3.2" viewBox="0 0 3.2 3.2"><circle cx="1.6" cy="1.6" r="1.6" fill="#cccccc"/></svg>
<svg style="left:2446.4px;top:736.4px;" width="3.2" height="3.2" viewBox="0 0 3.2 3.2"><circle cx="1.6" cy="1.6" r="1.6" fill="#cccccc"/></svg>
<svg style="left:2454.4px;top:736.4px;" width="3.2" height="3.2" viewBox="0 0 3.2 3.2"><circle cx="1.6" cy="1.6" r="1.6" fill="#cccccc"/></svg>
<svg style="left:2479px;top:733px;" width="16" height="9" viewBox="0 0 16 9"><path d="M0.7 8.3L8 1L15.3 8.3" fill="none" stroke="#cccccc" stroke-width="1.6"/></svg>
<svg style="left:2519px;top:731.5px;" width="14" height="14" viewBox="0 0 14 14"><path d="M0.7 0.7L13.3 13.3M13.3 0.7L0.7 13.3" stroke="#cccccc" stroke-width="1.6"/></svg>
<div class="t" style="left:430.50px;top:790.44px;font-family:'Liberation Mono',monospace;font-size:18.33px;font-weight:400;color:#cccccc;-webkit-text-stroke:0.35px currentColor;">PS E:\ESP32-P4-Nano\ESP-IDF_v5.3.1\02_Intermediate\I2SCodec> <span style="color:#e5e510">idf.py</span> add-dependency <span style="color:#11a8cd">"espressif/es8311^1.0.0"</span></div>
<div class="t" style="left:430.50px;top:816.44px;font-family:'Liberation Mono',monospace;font-size:18.33px;font-weight:400;color:#cccccc;-webkit-text-stroke:0.35px currentColor;">Executing action: add-dependency</div>
<div class="t" style="left:430.50px;top:842.44px;font-family:'Liberation Mono',monospace;font-size:18.33px;font-weight:400;color:#cccccc;-webkit-text-stroke:0.35px currentColor;">Successfully added dependency &quot;espressif/es8311^1.0.0&quot; to component &quot;main&quot;</div>
<div class="t" style="left:430.50px;top:868.44px;font-family:'Liberation Mono',monospace;font-size:18.33px;font-weight:400;color:#cccccc;-webkit-text-stroke:0.35px currentColor;">PS E:\ESP32-P4-Nano\ESP-IDF_v5.3.1\02_Intermediate\I2SCodec&gt; </div>
<div class="a" style="left:1102px;top:861px;width:11px;height:25px;background:#cccccc;"></div>
<div class="a" style="left:2540px;top:782px;width:20px;height:1px;background:#0e0e0e;"></div>
<div class="a" style="left:2540px;top:782px;width:1px;height:624px;background:#141414;"></div>
<div class="a" style="left:2541px;top:807px;width:19px;height:599px;background:#424242;"></div>
<svg style="left:19px;top:1413px;" width="14" height="18" viewBox="0 0 14 18"><path d="M0.8 6.5L6.5 12L0.8 17.5M13.2 0.5L7.5 6L13.2 11.5" fill="none" stroke="#ffffff" stroke-width="1.6"/></svg>
<svg style="left:63.5px;top:1414.5px;" width="20" height="17" viewBox="0 0 20 17"><path d="M1.5 1C1.5 1 5 2 6 3.6C7.2 3.3 8.5 3.2 10 3.2S12.8 3.3 14 3.6C15 2 18.5 1 18.5 1C18.5 1 19 5 18.5 7C19.3 8.3 19.6 9.7 19.6 11C19.6 14.5 16 16.5 10 16.5S0.4 14.5 0.4 11C0.4 9.7 0.7 8.3 1.5 7C1 5 1.5 1 1.5 1Z" fill="#cccccc"/><rect x="3.2" y="8.2" width="13.6" height="6" rx="3" fill="#181818"/><ellipse cx="7.2" cy="11.2" rx="1.3" ry="1.8" fill="#cccccc"/><ellipse cx="12.8" cy="11.2" rx="1.3" ry="1.8" fill="#cccccc"/></svg>
<div class="t" style="left:89.00px;top:1414.24px;font-family:'Liberation Sans',sans-serif;font-size:18px;font-weight:400;color:#cccccc;transform:scaleX(0.8899);transform-origin:0 0;">ESP-IDF v5.3.1</div>
<svg style="left:230.5px;top:1413px;" width="11" height="19" viewBox="0 0 11 19"><path d="M3 0.5V5M8 0.5V5M0.8 5H10.2V9.5C10.2 12.5 8.2 14 5.5 14S0.8 12.5 0.8 9.5Z" fill="none" stroke="#cccccc" stroke-width="1.5"/><path d="M5.5 14V19" stroke="#cccccc" stroke-width="1.5"/></svg>
<div class="t" style="left:251.00px;top:1414.24px;font-family:'Liberation Sans',sans-serif;font-size:18px;font-weight:400;color:#cccccc;transform:scaleX(0.9591);transform-origin:0 0;">COM3</div>
<svg style="left:326.5px;top:1413px;" width="18" height="19" viewBox="0 0 18 19"><rect x="3.5" y="3.5" width="11" height="12" rx="1" fill="none" stroke="#cccccc" stroke-width="1.5"/><path d="M6 0.5V3.5M9 0.5V3.5M12 0.5V3.5M6 15.5V18.5M9 15.5V18.5M12 15.5V18.5M0.5 6.5H3.5M0.5 9.5H3.5M0.5 12.5H3.5M14.5 6.5H17.5M14.5 9.5H17.5M14.5 12.5H17.5" stroke="#cccccc" stroke-width="1.3"/></svg>
<div class="t" style="left:351.00px;top:1414.24px;font-family:'Liberation Sans',sans-serif;font-size:18px;font-weight:400;color:#cccccc;transform:scaleX(0.9833);transform-origin:0 0;">esp32p4</div>
<svg style="left:443.5px;top:1413px;" width="20" height="20" viewBox="0 0 20 20"><path d="M0.8 3V1H7L8.5 2.5H14V4" fill="none" stroke="#cccccc" stroke-width="1.4"/><path d="M0.8 3V15.5H3" fill="none" stroke="#cccccc" stroke-width="1.4"/><path d="M3 5.5H9.5L11 7H19V18.5H3Z" fill="none" stroke="#cccccc" stroke-width="1.5"/><path d="M3 9.5H19" stroke="#cccccc" stroke-width="1.3"/></svg>
<svg style="left:489px;top:1413px;" width="20" height="20" viewBox="0 0 20 20"><path d="M15.77 8.28L18.86 8.47L18.86 11.03L15.77 11.22L15.05 12.97L17.10 15.28L15.28 17.10L12.97 15.05L11.22 15.77L11.03 18.86L8.47 18.86L8.28 15.77L6.53 15.05L4.22 17.10L2.40 15.28L4.45 12.97L3.73 11.22L0.64 11.03L0.64 8.47L3.73 8.28L4.45 6.53L2.40 4.22L4.22 2.40L6.53 4.45L8.28 3.73L8.47 0.64L11.03 0.64L11.22 3.73L12.97 4.45L15.28 2.40L17.10 4.22L15.05 6.53Z" fill="none" stroke="#cccccc" stroke-width="1.5" stroke-linejoin="round"/><circle cx="9.75" cy="9.75" r="2.5" fill="none" stroke="#cccccc" stroke-width="1.4"/></svg>
<svg style="left:535px;top:1413px;" width="16" height="20" viewBox="0 0 16 20"><path d="M0.5 3.5H15.5M5.5 3.5V1H10.5V3.5M2 3.5L3 19H13L14 3.5" fill="none" stroke="#cccccc" stroke-width="1.5"/><path d="M6 6.5V16.5" stroke="#519aba" stroke-width="1.3"/><path d="M8 6.5V16.5" stroke="#e5c07b" stroke-width="1.3"/><path d="M10 6.5V16.5" stroke="#c678dd" stroke-width="1.3"/></svg>
<svg style="left:579px;top:1413px;" width="20" height="20" viewBox="0 0 20 20"><path d="M13.5 0.8C16.5 0.8 19 3.3 19 6.3C19 9.3 16.5 11.8 13.5 11.8C12.8 11.8 12.2 11.7 11.7 11.5L3.2 18.8C2.4 19.5 1.2 19.4 0.6 18.6C0 17.9 0.2 16.8 0.9 16.2L8.6 8.4C8.3 7.8 8.1 7 8.1 6.3C8.1 3.3 10.5 0.8 13.5 0.8Z M13.5 2.2L12.5 5L14.5 7L17.6 6.2" fill="none" stroke="#cccccc" stroke-width="1.4" stroke-linejoin="round"/></svg>
<svg style="left:624px;top:1413px;" width="19" height="20" viewBox="0 0 19 20"><path d="M9.5 1L12 7.2H18.8L13.3 11.2L15.4 18L9.5 13.8L3.6 18L5.7 11.2L0.2 7.2H7Z" fill="none" stroke="#cccccc" stroke-width="1.8" stroke-linejoin="round"/></svg>
<svg style="left:672.5px;top:1413px;" width="13" height="20" viewBox="0 0 13 20"><path d="M8.5 0.8L1 11H6L4 18.8L12 7.5H7Z" fill="none" stroke="#cccccc" stroke-width="1.5" stroke-linejoin="round"/></svg>
<svg style="left:714px;top:1413px;" width="20" height="20" viewBox="0 0 20 20"><rect x="0.8" y="0.8" width="18" height="13" rx="1" fill="none" stroke="#cccccc" stroke-width="1.6"/><path d="M9.8 14V17.5M5 18.3H14.5" stroke="#cccccc" stroke-width="1.6"/></svg>
<svg style="left:757px;top:1413px;" width="22" height="20" viewBox="0 0 22 20"><path d="M7 11V0.5L21.5 9.5L11 16" fill="none" stroke="#cccccc" stroke-width="1.4"/><ellipse cx="5.5" cy="15" rx="3.4" ry="3.8" fill="none" stroke="#cccccc" stroke-width="1.3"/><path d="M2.2 13.8H8.8M0.5 12.5L2.2 13.8M10.5 12.5L8.8 13.8M0.5 15.5H2M9 15.5H10.5M0.8 19L2.5 17.5M10.2 19L8.5 17.5" stroke="#cccccc" stroke-width="1.1"/></svg>
<svg style="left:806px;top:1413px;" width="14" height="20" viewBox="0 0 14 20"><path d="M7 0.5C7.5 3 11 5.5 12.5 9C14 12.5 12.5 18.5 7.2 18.5C2.5 18.5 0.8 15 0.8 12.5C0.8 9.5 3 8 3.5 6C4.8 7.5 4.8 9 4.8 9C5.5 7 8 5 7 0.5Z M7.2 18.5C5 18.5 4 16.8 4.2 15C4.5 13 6.5 12 6.7 10.5C8.5 12 9.8 13.5 9.8 15.5C9.8 17.5 8.5 18.5 7.2 18.5Z" fill="none" stroke="#cccccc" stroke-width="1.3" stroke-linejoin="round"/></svg>
<svg style="left:849px;top:1413px;" width="20" height="20" viewBox="0 0 20 20"><rect x="0.8" y="0.8" width="17.5" height="17.5" rx="1.5" fill="none" stroke="#cccccc" stroke-width="1.6"/><path d="M4 5L8.5 9L4 13" fill="none" stroke="#cccccc" stroke-width="1.5"/><path d="M9.5 13.8H15" stroke="#cccccc" stroke-width="1.6"/></svg>
<svg style="left:894px;top:1413px;" width="20" height="20" viewBox="0 0 20 20"><rect x="0.8" y="0.8" width="17.5" height="17.5" fill="none" stroke="#cccccc" stroke-width="1.6"/><path d="M3.5 8H9.5V4.5L15.5 9.5L9.5 14.5V11H3.5Z" fill="#cccccc"/></svg>
<svg style="left:939px;top:1413px;" width="19" height="19" viewBox="0 0 19 19"><circle cx="9.3" cy="9.3" r="8.4" fill="none" stroke="#cccccc" stroke-width="1.6"/><path d="M5.6 5.6L13 13M13 5.6L5.6 13" stroke="#cccccc" stroke-width="1.5"/></svg>
<div class="t" style="left:963.00px;top:1414.24px;font-family:'Liberation Sans',sans-serif;font-size:18px;font-weight:400;color:#cccccc;transform:scaleX(0.9917);transform-origin:0 0;">0</div>
<svg style="left:980px;top:1413px;" width="19" height="19" viewBox="0 0 19 19"><path d="M9.2 0.8L18 17.8H0.4Z" fill="none" stroke="#cccccc" stroke-width="1.6" stroke-linejoin="round"/><path d="M9.2 6.5V12.5M9.2 14V15.8" stroke="#cccccc" stroke-width="1.6"/></svg>
<div class="t" style="left:1004.00px;top:1414.24px;font-family:'Liberation Sans',sans-serif;font-size:18px;font-weight:400;color:#cccccc;transform:scaleX(0.9917);transform-origin:0 0;">0</div>
<svg style="left:1040px;top:1413px;" width="17" height="20" viewBox="0 0 17 20"><circle cx="8.5" cy="6" r="2" fill="none" stroke="#cccccc" stroke-width="1.4"/><path d="M8.5 8L4.5 18.5M8.5 8L12.5 18.5M5.5 14H11.5" stroke="#cccccc" stroke-width="1.4"/><path d="M4.5 2.5C3 4.5 3 7.5 4.5 9.5M12.5 2.5C14 4.5 14 7.5 12.5 9.5M2 0.8C-0.3 3.8 -0.3 8.2 2 11.2M15 0.8C17.3 3.8 17.3 8.2 15 11.2" fill="none" stroke="#cccccc" stroke-width="1.4"/></svg>
<div class="t" style="left:1064.00px;top:1414.24px;font-family:'Liberation Sans',sans-serif;font-size:18px;font-weight:400;color:#cccccc;transform:scaleX(0.9917);transform-origin:0 0;">0</div>
<div class="t" style="left:1722.50px;top:1414.24px;font-family:'Liberation Sans',sans-serif;font-size:18px;font-weight:400;color:#cccccc;transform:scaleX(0.9229);transform-origin:0 0;">[ESP-IDF: QEMU]</div>
<div class="t" style="left:1880.50px;top:1414.24px;font-family:'Liberation Sans',sans-serif;font-size:18px;font-weight:400;color:#cccccc;transform:scaleX(0.9304);transform-origin:0 0;">[ESP-IDF: OpenOCD Server]</div>
<div class="t" style="left:2123.50px;top:1414.24px;font-family:'Liberation Sans',sans-serif;font-size:18px;font-weight:400;color:#cccccc;transform:scaleX(0.9725);transform-origin:0 0;">Ln 3, Col 14</div>
<div class="t" style="left:2240.50px;top:1414.24px;font-family:'Liberation Sans',sans-serif;font-size:18px;font-weight:400;color:#cccccc;transform:scaleX(0.9095);transform-origin:0 0;">Spaces: 2</div>
<div class="t" style="left:2336.50px;top:1414.24px;font-family:'Liberation Sans',sans-serif;font-size:18px;font-weight:400;color:#cccccc;transform:scaleX(0.9181);transform-origin:0 0;">UTF-8</div>
<div class="t" style="left:2406.50px;top:1414.24px;font-family:'Liberation Sans',sans-serif;font-size:18px;font-weight:400;color:#cccccc;transform:scaleX(0.8433);transform-origin:0 0;">LF</div>
<div class="t" style="left:2447.00px;top:1414.24px;font-family:'Liberation Sans',sans-serif;font-size:18px;font-weight:400;color:#cccccc;transform:scaleX(0.9623);transform-origin:0 0;">YAML</div>
<svg style="left:2519px;top:1412.5px;" width="19" height="20" viewBox="0 0 19 20"><path d="M8.5 2.5C5 2.8 3 5.5 3 8.5V13.5L0.8 16H16.2L14 13.5V10" fill="none" stroke="#cccccc" stroke-width="1.5"/><path d="M6.5 17.3A2.2 2.2 0 0 0 10.5 17.3" fill="none" stroke="#cccccc" stroke-width="1.5"/><circle cx="14" cy="4.3" r="3.8" fill="#cccccc"/></svg>
<div class="a" style="left:491px;top:108px;width:1148px;height:564px;background:transparent;border:7px solid #f93a3a;"></div>
<div class="a" style="left:92px;top:359px;width:230px;height:58px;background:transparent;border:7px solid #f93a3a;"></div>
<div class="a" style="left:412px;top:778px;width:1215px;height:130px;background:transparent;border:7px solid #f93a3a;"></div>
<div class="a" style="left:836px;top:1393px;width:47px;height:54px;background:transparent;border:7px solid #f93a3a;"></div>
<div class="a" style="left:937px;top:227px;width:34px;height:34px;background:#f93a3a;border-radius:50%;"></div>
<div class="t" style="left:947.00px;top:231.51px;font-family:'Liberation Sans',sans-serif;font-size:19.5px;font-weight:400;color:#ffffff;transform:scaleX(1.1308);transform-origin:0 0;">4</div>
<div class="a" style="left:336px;top:368px;width:34px;height:34px;background:#f93a3a;border-radius:50%;"></div>
<div class="t" style="left:346.00px;top:372.51px;font-family:'Liberation Sans',sans-serif;font-size:19.5px;font-weight:400;color:#ffffff;transform:scaleX(1.1308);transform-origin:0 0;">3</div>
<div class="a" style="left:1334px;top:837px;width:34px;height:34px;background:#f93a3a;border-radius:50%;"></div>
<div class="t" style="left:1344.00px;top:841.51px;font-family:'Liberation Sans',sans-serif;font-size:19.5px;font-weight:400;color:#ffffff;transform:scaleX(1.1308);transform-origin:0 0;">2</div>
<div class="a" style="left:841px;top:1351px;width:34px;height:34px;background:#f93a3a;border-radius:50%;"></div>
<div class="t" style="left:851.00px;top:1355.51px;font-family:'Liberation Sans',sans-serif;font-size:19.5px;font-weight:400;color:#ffffff;transform:scaleX(1.1308);transform-origin:0 0;">1</div>
</body></html>
